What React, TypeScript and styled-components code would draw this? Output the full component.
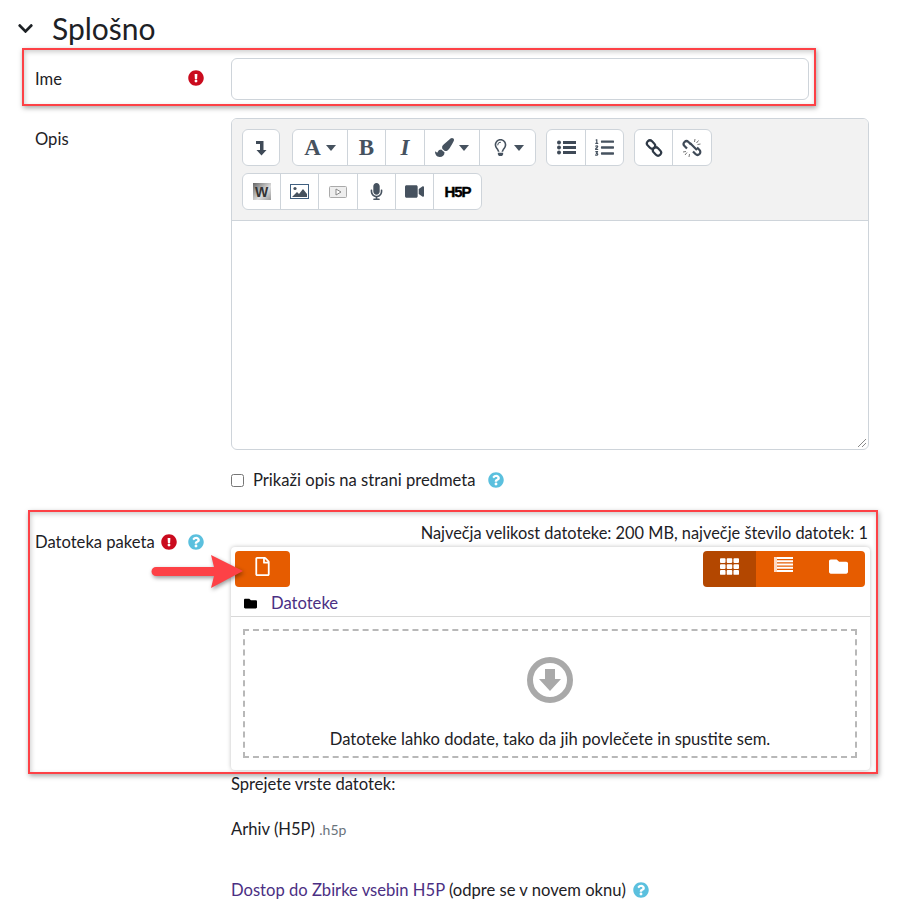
import styled, { createGlobalStyle } from "styled-components";
import {
  FaChevronDown,
  FaExclamationCircle,
  FaQuestionCircle,
  FaPaintBrush,
  FaRegLightbulb,
  FaListOl,
  FaMicrophone,
  FaVideo,
  FaTh,
  FaFolder,
  FaRegFile,
} from "react-icons/fa";

const GlobalStyle = createGlobalStyle`
  html, body { margin: 0; padding: 0; background: #fff; }
  body {
    font-family: "Lato", "Noto Sans", sans-serif;
    font-size: 16.6px;
    color: #1d2125;
  }
`;

const Page = styled.div`
  position: relative;
  width: 905px;
  height: 916px;
  overflow: hidden;
`;

const SectionTitle = styled.h3`
  display: flex;
  align-items: center;
  gap: 18px;
  height: 58px;
  margin: 0;
  padding: 0 0 2px 17px;
  box-sizing: border-box;
  font-size: 30px;
  font-weight: 400;
  line-height: 56px;
  svg { font-size: 17px; color: #1d2125; }
`;

const Row = styled.div<{ $top?: number }>`
  display: grid;
  grid-template-columns: 196px 638px;
  padding-left: 35px;
  margin-top: ${(p) => p.$top ?? 0}px;
`;

const Label = styled.div`
  display: flex;
  align-items: center;
  gap: 6px;
  height: 42px;
  padding: 0 27px 0 0;
  box-sizing: border-box;
  white-space: nowrap;
`;

const FileLabel = styled(Label)`
  padding-top: 2px;
`;

const Required = styled(FaExclamationCircle)<{ $push?: boolean }>`
  color: #ca0b1e;
  font-size: 16px;
  margin: ${(p) => (p.$push ? "-2px 0 0 auto" : "0")};
  flex: none;
`;

const Help = styled(FaQuestionCircle)`
  color: #5bc0de;
  font-size: 16px;
  flex: none;
`;

const LabelHelp = styled(Help)`
  margin-left: 5px;
`;

const TextInput = styled.input`
  display: block;
  width: 578px;
  height: 42px;
  box-sizing: border-box;
  border: 1px solid #ced4da;
  border-radius: 6px;
  background: #fff;
`;

const Editor = styled.div`
  width: 638px;
  height: 332px;
  box-sizing: border-box;
  border: 1px solid #ced4da;
  border-radius: 6px;
  position: relative;
  overflow: hidden;
`;

const Toolbar = styled.div`
  height: 102px;
  box-sizing: border-box;
  padding: 10px 10px 0;
  background: #f2f2f2;
  border-bottom: 1px solid #ced4da;
  display: flex;
  flex-direction: column;
  gap: 7px;
`;

const ToolRow = styled.div`
  display: flex;
  gap: 10px;
`;

const Group = styled.div<{ $after?: number }>`
  display: flex;
  height: 37px;
  box-sizing: border-box;
  background: #fff;
  border: 1px solid #ced4da;
  border-radius: 6px;
  margin-right: ${(p) => p.$after ?? 0}px;
`;

const Tool = styled.div<{ $w?: number }>`
  display: flex;
  align-items: center;
  justify-content: center;
  gap: 5px;
  box-sizing: border-box;
  width: ${(p) => p.$w ?? 38}px;
  color: #46525f;
  font-size: 17px;
  & + & { border-left: 1px solid #ced4da; }
`;

const SerifGlyph = styled.span<{ $italic?: boolean }>`
  font-family: "Liberation Serif", serif;
  font-weight: 700;
  font-style: ${(p) => (p.$italic ? "italic" : "normal")};
  font-size: 23px;
  line-height: 1;
  color: #46525f;
`;

const Caret = styled.span`
  width: 0;
  height: 0;
  border-left: 5.5px solid transparent;
  border-right: 5.5px solid transparent;
  border-top: 6px solid #46525f;
`;

const WordBadge = styled.span`
  display: flex;
  align-items: center;
  justify-content: center;
  width: 18px;
  height: 17px;
  background: linear-gradient(135deg, #666, #ddd 60%, #999);
  font-family: "Liberation Sans", sans-serif;
  font-size: 14px;
  font-weight: 700;
  color: #333;
`;

const HfpMark = styled.span`
  font-family: "Liberation Sans", sans-serif;
  font-size: 15px;
  font-weight: 700;
  letter-spacing: -1px;
  -webkit-text-stroke: 0.4px #000;
  color: #000;
`;

const ResizeGrip = styled.svg`
  position: absolute;
  right: 1px;
  bottom: 1px;
  width: 10px;
  height: 10px;
`;

const CheckLine = styled.label`
  display: flex;
  align-items: center;
  height: 20px;
  margin-top: 20px;
  input {
    width: 13px;
    height: 13px;
    margin: 0 9px 0 0;
  }
  svg { margin-left: 12px; }
`;

const LimitNote = styled.div`
  text-align: right;
  height: 27px;
  line-height: 26px;
  width: 637px;
  font-size: 16.35px;
  white-space: nowrap;
`;

const FileManager = styled.div`
  width: 639px;
  height: 223px;
  box-sizing: border-box;
  background: #fff;
  border-radius: 4px;
  box-shadow: 0 0 4px rgba(0, 0, 0, 0.25);
  padding-top: 4px;
`;

const FileToolbar = styled.div`
  display: flex;
  justify-content: space-between;
  padding: 0 5px 0 4px;
`;

const OrangeButton = styled.div<{ $active?: boolean; $w?: number }>`
  display: flex;
  align-items: flex-start;
  justify-content: center;
  padding-top: 6px;
  box-sizing: border-box;
  width: ${(p) => p.$w ?? 55}px;
  height: 36px;
  border-radius: 4px;
  background: ${(p) => (p.$active ? "#b34700" : "#e65c00")};
  color: #fff;
  font-size: 19px;
`;

const ViewSwitch = styled.div`
  display: flex;
  border-radius: 4px;
  overflow: hidden;
  ${OrangeButton} { border-radius: 0; }
`;

const PathBar = styled.div`
  display: flex;
  align-items: center;
  gap: 14px;
  height: 26px;
  padding: 3px 0 0 13px;
  border-bottom: 1px solid #d8d8d8;
  svg { font-size: 13px; color: #000; }
`;

const FileLink = styled.a`
  color: #4b2f83;
`;

const DropArea = styled.div`
  margin: 12px 12px 0;
  height: 129px;
  width: 614px;
  box-sizing: border-box;
  border: 2px dashed #b8b8b8;
  display: flex;
  flex-direction: column;
  align-items: center;
  padding-top: 26px;
`;

const DropHint = styled.div`
  margin-top: 26px;
`;

const Note = styled.div<{ $top: number }>`
  margin-top: ${(p) => p.$top}px;
  line-height: 24px;
  white-space: nowrap;
  svg { vertical-align: -2px; margin-left: 7px; }
`;

const Extension = styled.span`
  font-size: 14px;
  color: #6a737b;
`;

const Highlight = styled.div<{ $left: number; $top: number; $w: number; $h: number }>`
  position: absolute;
  left: ${(p) => p.$left}px;
  top: ${(p) => p.$top}px;
  width: ${(p) => p.$w}px;
  height: ${(p) => p.$h}px;
  box-sizing: border-box;
  border: 2px solid #fd4146;
  box-shadow: 1px 2px 5px rgba(0, 0, 0, 0.35), inset 1px 2px 5px rgba(0, 0, 0, 0.2);
  pointer-events: none;
`;

const Arrow = styled.svg`
  position: absolute;
  left: 148px;
  top: 550px;
  width: 100px;
  height: 44px;
  overflow: visible;
  filter: drop-shadow(1px 2px 2px rgba(0, 0, 0, 0.4));
`;

const DownloadCircle = () => (
  <svg width="46" height="46" viewBox="0 0 46 46">
    <circle cx="23" cy="23" r="20" fill="none" stroke="#a9a9a9" strokeWidth="6" />
    <path d="M18 12h10v10h6L23 34 12 22h6z" fill="#a9a9a9" />
  </svg>
);

const IndentIcon = () => (
  <svg width="12" height="16" viewBox="0 0 12 16" fill="#3f4a57">
    <path d="M1 1h7.500v9H11.500L6.500 15.500 1.500 10H5V4H1z" />
  </svg>
);

const ListIcon = () => (
  <svg width="19" height="15" viewBox="0 0 19 15" fill="#3f4a57">
    <circle cx="2" cy="2.500" r="2" />
    <circle cx="2" cy="7.500" r="2" />
    <circle cx="2" cy="12.500" r="2" />
    <rect x="6" y="1" width="13" height="3" />
    <rect x="6" y="6" width="13" height="3" />
    <rect x="6" y="11" width="13" height="3" />
  </svg>
);

const LinkIcon = () => (
  <svg width="18" height="18" viewBox="0 0 18 18" fill="none" stroke="#2f3a47" strokeWidth="2.200">
    <rect x="1.500" y="2.500" width="9" height="6" rx="3" transform="rotate(45 6 5.500)" />
    <rect x="7.500" y="9.500" width="9" height="6" rx="3" transform="rotate(45 12 12.500)" />
  </svg>
);

const UnlinkIcon = () => (
  <svg width="20" height="20" viewBox="0 0 20 20" fill="none" stroke="#3f4a57">
    <g strokeWidth="2.200">
      <path d="M9 6.500L6.500 4a2.800 2.800 0 0 0-4 4L5 10.500" />
      <path d="M11 13.500l2.500 2.500a2.800 2.800 0 0 0 4-4L15 9.500" />
      <path d="M8 5l7 7" />
    </g>
    <path d="M13 1l-.5 3M16.500 2.500L14.500 5M18.500 6l-3 .5M1 14l3-.5M3 17l2-2.500M7 19l.5-3" strokeWidth="1" stroke="#777" />
  </svg>
);

const ImageIcon = () => (
  <svg width="19" height="15" viewBox="0 0 19 15">
    <rect x="0.500" y="0.500" width="18" height="14" fill="#fff" stroke="#3f5f80" />
    <circle cx="5" cy="4.500" r="1.600" fill="#46525f" />
    <path d="M2 13l5-5 2 2 4-5 4 5v3z" fill="#46525f" />
  </svg>
);

const MediaIcon = () => (
  <svg width="18" height="12" viewBox="0 0 18 12">
    <rect x="0.500" y="0.500" width="17" height="11" rx="1" fill="#eee" stroke="#aaa" />
    <path d="M7 3l5 3-5 3z" fill="#fff" stroke="#888" />
  </svg>
);

const StripedListIcon = () => (
  <svg width="19" height="15" viewBox="0 0 19 15" fill="#fff">
    <rect width="3" height="15" y="0" fill="#ffd9c2" />
    <rect x="3" y="0" width="16" height="2" />
    <rect x="3" y="3.250" width="16" height="2" />
    <rect x="3" y="6.500" width="16" height="2" />
    <rect x="3" y="9.750" width="16" height="2" />
    <rect x="3" y="13" width="16" height="2" />
  </svg>
);

const App = () => {
  return (
    <Page>
      <GlobalStyle />
      <SectionTitle>
        <FaChevronDown />
        Splošno
      </SectionTitle>

      <Row>
        <Label>
          Ime
          <Required $push />
        </Label>
        <TextInput />
      </Row>

      <Row $top={18}>
        <Label>Opis</Label>
        <div>
          <Editor>
            <Toolbar>
              <ToolRow>
                <Group $after={2}>
                  <Tool $w={36}><IndentIcon /></Tool>
                </Group>
                <Group>
                  <Tool $w={54}><SerifGlyph>A</SerifGlyph><Caret /></Tool>
                  <Tool><SerifGlyph>B</SerifGlyph></Tool>
                  <Tool $w={39}><SerifGlyph $italic>I</SerifGlyph></Tool>
                  <Tool $w={55}><FaPaintBrush size={19} /><Caret /></Tool>
                  <Tool $w={56}><FaRegLightbulb /><Caret /></Tool>
                </Group>
                <Group>
                  <Tool><ListIcon /></Tool>
                  <Tool><FaListOl size={19} /></Tool>
                </Group>
                <Group>
                  <Tool $w={37}><LinkIcon /></Tool>
                  <Tool $w={39}><UnlinkIcon /></Tool>
                </Group>
              </ToolRow>
              <ToolRow>
                <Group>
                  <Tool $w={37}><WordBadge>W</WordBadge></Tool>
                  <Tool><ImageIcon /></Tool>
                  <Tool $w={39}><MediaIcon /></Tool>
                  <Tool><FaMicrophone /></Tool>
                  <Tool><FaVideo size={19} /></Tool>
                  <Tool $w={48}><HfpMark>H5P</HfpMark></Tool>
                </Group>
              </ToolRow>
            </Toolbar>
            <ResizeGrip viewBox="0 0 10 10">
              <path d="M1 9L9 1M5 9L9 5" stroke="#888" strokeWidth="1" />
            </ResizeGrip>
          </Editor>
          <CheckLine>
            <input type="checkbox" />
            Prikaži opis na strani predmeta
            <Help />
          </CheckLine>
        </div>
      </Row>

      <Row $top={30}>
        <FileLabel>
          Datoteka paketa
          <Required />
          <LabelHelp />
        </FileLabel>
        <div>
          <LimitNote>Največja velikost datoteke: 200 MB, največje število datotek: 1</LimitNote>
          <FileManager>
            <FileToolbar>
              <OrangeButton><FaRegFile /></OrangeButton>
              <ViewSwitch>
                <OrangeButton $active $w={53}><FaTh /></OrangeButton>
                <OrangeButton><StripedListIcon /></OrangeButton>
                <OrangeButton $w={54}><FaFolder /></OrangeButton>
              </ViewSwitch>
            </FileToolbar>
            <PathBar>
              <FaFolder />
              <FileLink>Datoteke</FileLink>
            </PathBar>
            <DropArea>
              <DownloadCircle />
              <DropHint>Datoteke lahko dodate, tako da jih povlečete in spustite sem.</DropHint>
            </DropArea>
          </FileManager>
          <Note $top={2}>Sprejete vrste datotek:</Note>
          <Note $top={21}>
            Arhiv (H5P) <Extension>.h5p</Extension>
          </Note>
          <Note $top={36}>
            <FileLink>Dostop do Zbirke vsebin H5P</FileLink> (odpre se v novem oknu)
            <Help />
          </Note>
        </div>
      </Row>

      <Highlight $left={22} $top={48} $w={794} $h={58} />
      <Highlight $left={28} $top={510} $w={850} $h={264} />
      <Arrow viewBox="0 0 100 44">
        <path d="M8 17h58l-3-12 32 16-32 17 3-12H8a4.500 4.500 0 0 1 0-9z" fill="#fd4146" />
      </Arrow>
    </Page>
  );
};

export default App;
